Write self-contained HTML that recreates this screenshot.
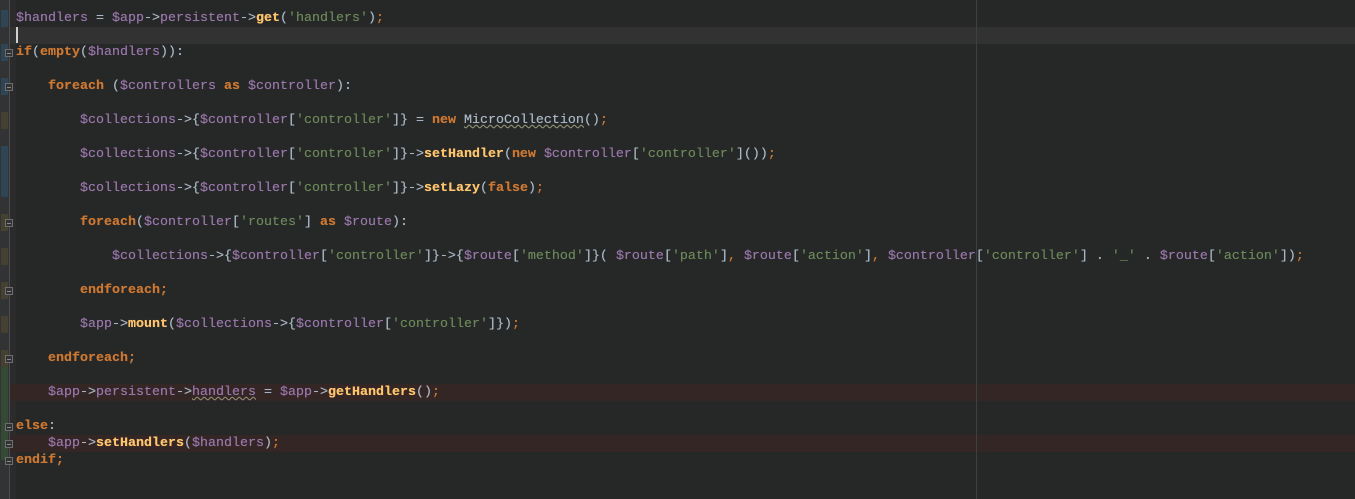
<!DOCTYPE html>
<html><head><meta charset="utf-8"><style>
html,body{margin:0;padding:0}
body{width:1355px;height:499px;background:#262727;position:relative;overflow:hidden;font-family:"Liberation Mono",monospace;font-size:13.33px;color:#a9b7c6}
.gut{position:absolute;left:0;top:0;width:9px;height:499px;background:#313335}
.sep{position:absolute;left:9px;top:0;width:1px;height:499px;background:#4a4c4e}
.strip{position:absolute;left:10px;top:0;width:6px;height:499px;background:#2b2b2b}
.m{position:absolute;left:1px;width:7px}
.bl{background:#2f4556}.br{background:#45402f}.gr{background:#344a34}
.rm{position:absolute;left:976px;top:0;width:1px;height:499px;background:#3d3f41}
.hl{position:absolute;left:10px;right:0;height:17px}
.code{position:absolute;left:16px;top:10px;white-space:pre;line-height:17px;text-shadow:0 0 0.4px currentColor}
.v{color:#9876aa}.k{color:#cc7832;font-weight:bold}.s{color:#6a8759}.f{color:#ffc66d;font-weight:bold}.o{color:#cc7832}
.u{text-decoration:underline wavy #8a8a6a;text-decoration-thickness:1px}
.cur{position:absolute;left:16px;top:27px;width:2px;height:16px;background:#cfcfcf}
.fold{position:absolute;left:5px;width:8px;height:8px;border:1px solid #6e6e6e;box-sizing:border-box;background:#313335}
.fold:after{content:"";position:absolute;left:1px;top:3px;width:4px;height:1px;background:#8a8a8a}
</style></head><body>
<div class="gut"></div>
<div class="m bl" style="top:10px;height:17px"></div>
<div class="m bl" style="top:44px;height:17px"></div>
<div class="m bl" style="top:78px;height:17px"></div>
<div class="m br" style="top:112px;height:17px"></div>
<div class="m bl" style="top:146px;height:51px"></div>
<div class="m br" style="top:214px;height:17px"></div>
<div class="m br" style="top:248px;height:17px"></div>
<div class="m br" style="top:282px;height:17px"></div>
<div class="m br" style="top:316px;height:17px"></div>
<div class="m br" style="top:350px;height:17px"></div>
<div class="m gr" style="top:367px;height:93px"></div>
<div class="sep"></div>
<div class="strip"></div>
<div class="hl" style="top:27px;background:#323232"></div>
<div class="hl" style="top:384px;background:#352626"></div>
<div class="hl" style="top:435px;background:#352626"></div>
<div class="rm"></div>
<div class="fold" style="top:49px"></div>
<div class="fold" style="top:83px"></div>
<div class="fold" style="top:219px"></div>
<div class="fold" style="top:287px"></div>
<div class="fold" style="top:355px"></div>
<div class="fold" style="top:423px"></div>
<div class="fold" style="top:440px"></div>
<div class="fold" style="top:457px"></div>
<div class="cur"></div>
<div class="code"><span class="v">$handlers</span> = <span class="v">$app</span>-&gt;<span class="v">persistent</span>-&gt;<span class="f">get</span>(<span class="s">'handlers'</span>)<span class="o">;</span>

<span class="k">if</span>(<span class="k">empty</span>(<span class="v">$handlers</span>)):

    <span class="k">foreach</span> (<span class="v">$controllers</span> <span class="k">as</span> <span class="v">$controller</span>):

        <span class="v">$collections</span>-&gt;{<span class="v">$controller</span>[<span class="s">'controller'</span>]} = <span class="k">new</span> <span class="u">MicroCollection</span>()<span class="o">;</span>

        <span class="v">$collections</span>-&gt;{<span class="v">$controller</span>[<span class="s">'controller'</span>]}-&gt;<span class="f">setHandler</span>(<span class="k">new</span> <span class="v">$controller</span>[<span class="s">'controller'</span>]())<span class="o">;</span>

        <span class="v">$collections</span>-&gt;{<span class="v">$controller</span>[<span class="s">'controller'</span>]}-&gt;<span class="f">setLazy</span>(<span class="k">false</span>)<span class="o">;</span>

        <span class="k">foreach</span>(<span class="v">$controller</span>[<span class="s">'routes'</span>] <span class="k">as</span> <span class="v">$route</span>):

            <span class="v">$collections</span>-&gt;{<span class="v">$controller</span>[<span class="s">'controller'</span>]}-&gt;{<span class="v">$route</span>[<span class="s">'method'</span>]}( <span class="v">$route</span>[<span class="s">'path'</span>]<span class="o">,</span> <span class="v">$route</span>[<span class="s">'action'</span>]<span class="o">,</span> <span class="v">$controller</span>[<span class="s">'controller'</span>] . <span class="s">'_'</span> . <span class="v">$route</span>[<span class="s">'action'</span>])<span class="o">;</span>

        <span class="k">endforeach;</span>

        <span class="v">$app</span>-&gt;<span class="f">mount</span>(<span class="v">$collections</span>-&gt;{<span class="v">$controller</span>[<span class="s">'controller'</span>]})<span class="o">;</span>

    <span class="k">endforeach;</span>

    <span class="v">$app</span>-&gt;<span class="v">persistent</span>-&gt;<span class="v u">handlers</span> = <span class="v">$app</span>-&gt;<span class="f">getHandlers</span>()<span class="o">;</span>

<span class="k">else</span>:
    <span class="v">$app</span>-&gt;<span class="f">setHandlers</span>(<span class="v">$handlers</span>)<span class="o">;</span>
<span class="k">endif;</span></div>
</body></html>
